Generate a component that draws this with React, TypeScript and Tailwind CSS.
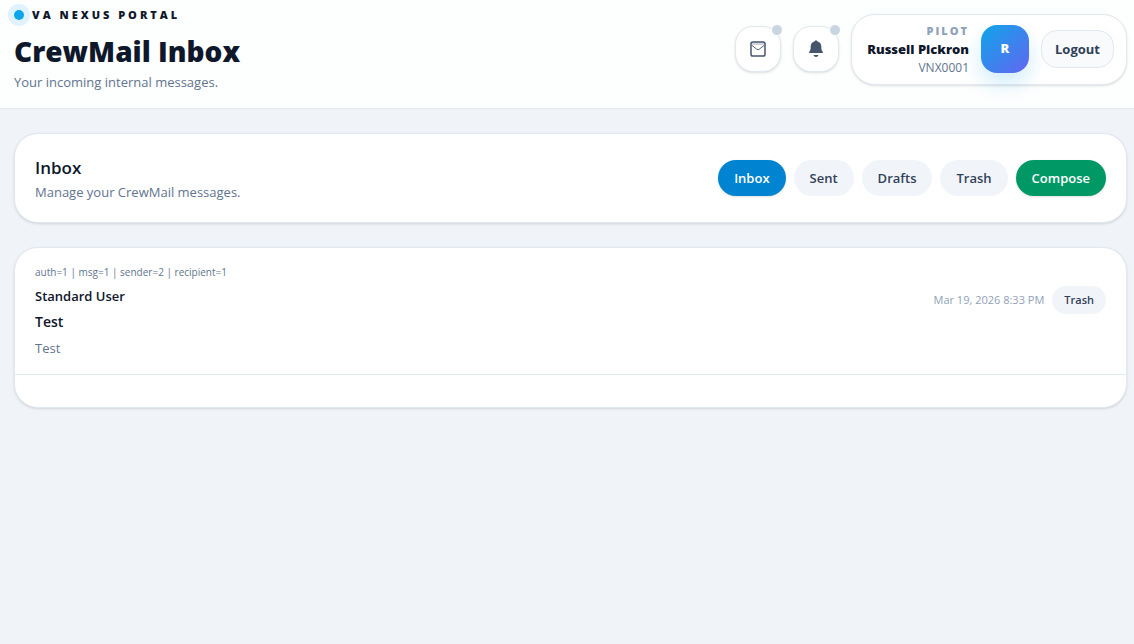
import { useState } from "react";

const folders = ["Inbox", "Sent", "Drafts", "Trash"];

const initialMessages = [
  {
    id: 1,
    debug: "auth=1 | msg=1 | sender=2 | recipient=1",
    sender: "Standard User",
    subject: "Test",
    body: "Test",
    sentAt: "Mar 19, 2026 8:33 PM",
  },
];

function MailIcon() {
  return (
    <svg width="16" height="16" viewBox="0 0 16 16" fill="none" stroke="currentColor" aria-hidden="true">
      <rect x="1" y="1" width="14" height="14" rx="1.8" strokeWidth="1.5" />
      <path d="M1.500 3h13" strokeWidth="0.5" />
      <path d="M2 4.500l4.600 3.600a2.200 2.200 0 0 0 2.800 0L14 4.500" strokeWidth="0.9" />
    </svg>
  );
}

function BellIcon() {
  return (
    <svg width="16" height="18" viewBox="0 0 16 18" fill="currentColor" aria-hidden="true">
      <path d="M8 .5c.9 0 1.500.5 1.600 1.100C12.200 2.300 13.300 4.300 13.300 6.500c0 2.800.3 3.800 1.100 4.700.3.4.5.7.5 1.800H1.100c0-1.100.2-1.400.5-1.800.8-.9 1.100-1.900 1.100-4.700 0-2.200 1.100-4.200 3.700-4.900C6.500 1 7.100.5 8 .5z" />
      <path d="M5.500 15h5c-.3 1.300-1.300 2-2.500 2s-2.200-.7-2.500-2z" />
    </svg>
  );
}

function IconButton({ label, children }: { label: string; children: React.ReactNode }) {
  return (
    <button
      type="button"
      aria-label={label}
      className="relative flex size-[46px] items-center justify-center rounded-[18px] border border-slate-200 bg-white text-slate-600 shadow-sm"
    >
      {children}
      <span className="absolute -top-[3px] -right-[3px] size-3 rounded-full border border-white bg-slate-300" />
    </button>
  );
}

export default function App() {
  const [folder, setFolder] = useState("Inbox");
  const [messages, setMessages] = useState(initialMessages);

  return (
    <div className="min-h-screen bg-[#f0f4f9] font-['Segoe_UI','Open_Sans',sans-serif] text-slate-900">
      <header className="flex items-start justify-between border-b border-slate-200 bg-[#fdfefe] pt-2 pr-[7px] pb-[17px] pl-[14px]">
        <div>
          <div className="flex items-center gap-2">
            <span className="size-2.5 rounded-full bg-[#0ea5e9] ring-6 ring-sky-100" />
            <span className="text-[11px] leading-[14px] font-black tracking-[3px] uppercase">VA Nexus Portal</span>
          </div>
          <h1 className="mt-[11px] text-[28px] leading-9 font-black">CrewMail Inbox</h1>
          <p className="mt-1 text-[13px] leading-[18px] text-slate-500">Your incoming internal messages.</p>
        </div>

        <div className="mt-1.5 flex items-start gap-3">
          <div className="flex gap-3 pt-3">
            <IconButton label="CrewMail">
              <MailIcon />
            </IconButton>
            <IconButton label="Notifications">
              <BellIcon />
            </IconButton>
          </div>
          <div className="flex items-center gap-3 rounded-3xl border border-slate-200 bg-white px-3 pt-[9px] pb-2.5 shadow-sm">
            <div className="min-w-[105px] text-right">
              <p className="text-[11px] leading-[13px] font-black tracking-[2px] text-slate-400 uppercase">Pilot</p>
              <p className="text-[13px] leading-6 font-black">Russell Pickron</p>
              <p className="text-xs leading-[13px] text-slate-500">VNX0001</p>
            </div>
            <div className="flex size-12 items-center justify-center rounded-2xl bg-[linear-gradient(135deg,#0ea5e9,#6366f1)] text-[13px] font-black text-white shadow-[0_10px_20px_rgba(14,165,233,0.2)]">
              R
            </div>
            <button
              type="button"
              className="rounded-2xl border border-slate-200 bg-slate-50 px-[13px] py-2 text-[13px] leading-5 font-bold text-slate-700"
            >
              Logout
            </button>
          </div>
        </div>
      </header>

      <main className="space-y-6 pt-6 pr-[7px] pl-[14px]">
        <section className="flex items-center justify-between rounded-3xl border border-slate-200 bg-white px-5 py-5 shadow-sm">
          <div>
            <h2 className="text-[17px] leading-7 font-semibold">Inbox</h2>
            <p className="text-[13px] leading-5 text-slate-500">Manage your CrewMail messages.</p>
          </div>
          <nav className="flex gap-2">
            {folders.map((name) => (
              <button
                key={name}
                type="button"
                onClick={() => setFolder(name)}
                className={
                  folder === name
                    ? "rounded-full bg-[#0084d1] px-4 py-2 text-[13px] leading-5 font-semibold text-white shadow-sm"
                    : "rounded-full bg-slate-100 px-4 py-2 text-[13px] leading-5 font-semibold text-slate-700"
                }
              >
                {name}
              </button>
            ))}
            <button
              type="button"
              className="rounded-full bg-[#009966] px-4 py-2 text-[13px] leading-5 font-semibold text-white shadow-sm"
            >
              Compose
            </button>
          </nav>
        </section>

        <section className="rounded-3xl border border-slate-200 bg-white pb-8 shadow-sm">
          {messages.map((m) => (
            <article key={m.id} className="border-b border-slate-200 px-5 py-4">
              <p className="text-[10px] leading-4 text-slate-500">{m.debug}</p>
              <div className="flex items-start justify-between">
                <div>
                  <p className="mt-1.5 text-[13px] leading-5 font-semibold">{m.sender}</p>
                  <p className="mt-1 text-sm leading-6 font-semibold">{m.subject}</p>
                  <p className="mt-1 text-[13px] leading-5 text-slate-500">{m.body}</p>
                </div>
                <div className="mt-1.5 flex items-center gap-2">
                  <time className="text-[11px] leading-4 text-slate-400">{m.sentAt}</time>
                  <button
                    type="button"
                    onClick={() => setMessages(messages.filter((x) => x.id !== m.id))}
                    className="rounded-full bg-slate-100 px-3 py-1.5 text-[11px] leading-4 font-semibold text-slate-700"
                  >
                    Trash
                  </button>
                </div>
              </div>
            </article>
          ))}
        </section>
      </main>
    </div>
  );
}
